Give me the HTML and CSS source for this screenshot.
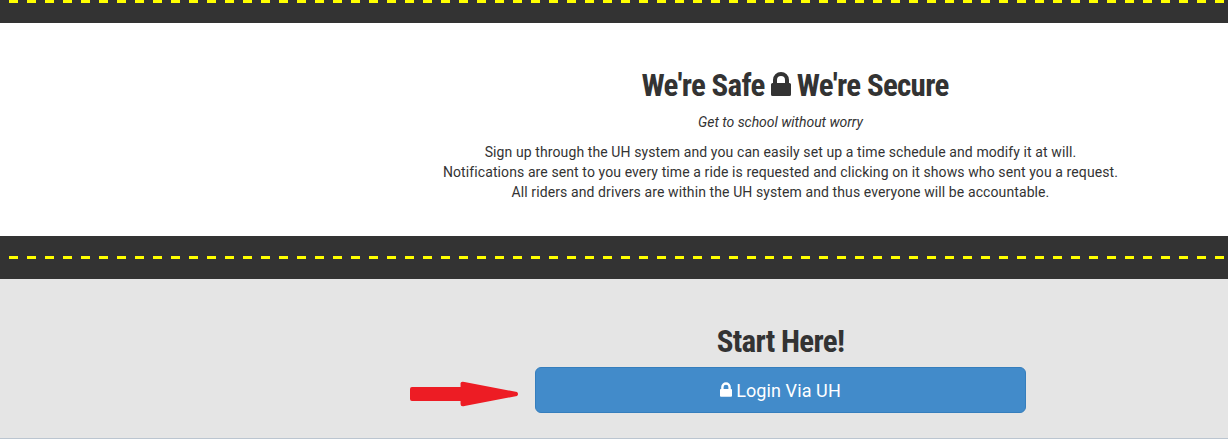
FILE: index.html
```html
<!DOCTYPE html>
<html lang="en">
<head>
<meta charset="utf-8">
<title>Ride Share</title>
<link rel="stylesheet" href="styles.css">
</head>
<body>
<div class="road road-top"><svg class="stripe" width="1228" height="3"><line x1="9" y1="1.5" x2="1228" y2="1.5"/></svg></div>
<section class="safe">
<div class="content">
<h2 class="safe-title"><span>We're Safe</span><svg class="lock" viewBox="0 0 20 24"><path fill-rule="evenodd" d="M2 11V8a8 8 0 0 1 16 0v3h.5Q20 11 20 12.500v10Q20 24 18.500 24h-17Q0 24 0 22.500v-10Q0 11 1.500 11zM6 11h8V8a4 4 0 0 0-8 0z"/></svg><span>We're Secure</span></h2>
<p class="tagline">Get to school without worry</p>
<p class="copy"><span>Sign up through the UH system and you can easily set up a time schedule and modify it at will.</span><span>Notifications are sent to you every time a ride is requested and clicking on it shows who sent you a request.</span><span>All riders and drivers are within the UH system and thus everyone will be accountable.</span></p>
</div>
</section>
<div class="road"><svg class="stripe" width="1228" height="3"><line x1="9" y1="1.5" x2="1228" y2="1.5"/></svg></div>
<section class="start">
<div class="content">
<h2>Start Here!</h2>
<a class="login"><svg class="lock small" viewBox="0 0 20 24"><path fill-rule="evenodd" d="M2 11V8a8 8 0 0 1 16 0v3h.5Q20 11 20 12.500v10Q20 24 18.500 24h-17Q0 24 0 22.500v-10Q0 11 1.500 11zM6 11h8V8a4 4 0 0 0-8 0z"/></svg><span>Login Via UH</span></a>
</div>
<svg class="arrow" viewBox="0 0 110 26"><path d="M2 6H51V2Q52 0 55 1L108 11Q110 13 108 15L55 25Q51 26 51 23V20H2Q0 20 0 18V8Q0 6 2 6Z"/></svg>
</section>
</body>
</html>
```
FILE: styles.css
```css
*{box-sizing:border-box}
body{margin:0;height:439px;overflow:hidden;font:14px/20px Roboto,sans-serif;color:#333;background:#fff}
.road{height:43px;background:#333;padding-top:20px}
.road-top{height:23px;padding-top:0}
.stripe{display:block}
.stripe line{stroke:#ff0;stroke-width:3;stroke-dasharray:9 9}
.safe{height:213px;padding:46px 0 0 333px}
.content{width:895px;display:flex;flex-direction:column;align-items:center}
h2{margin:0;height:33px;font:700 31px/33px "Roboto Condensed",Roboto,sans-serif;letter-spacing:-.7px;display:flex;align-items:center;white-space:nowrap}
.safe-title{padding-left:29px;gap:6px}
.safe-title .lock{margin-top:-3px}
.lock{width:20px;height:24px;fill:currentColor}
.tagline{margin:10px 0;font-style:italic;letter-spacing:-.04px}
.copy{margin:0;display:flex;flex-direction:column;align-items:center;white-space:nowrap;letter-spacing:.1px}
.start{position:relative;height:160px;padding:46px 0 0 333px;background:#e5e5e5;border-bottom:1px solid #bbc5d0}
.login{display:flex;align-items:center;justify-content:center;width:491px;height:46px;margin-top:9px;padding-top:1px;background:#428bca;border:1px solid #357ebd;border-radius:6px;color:#fff;font-size:18px;letter-spacing:.1px;gap:4px}
.login .small{width:12px;height:15px;margin-top:-2px}
.arrow{position:absolute;left:410px;top:102px;width:109px;height:26px;fill:#ed1c24}
```
